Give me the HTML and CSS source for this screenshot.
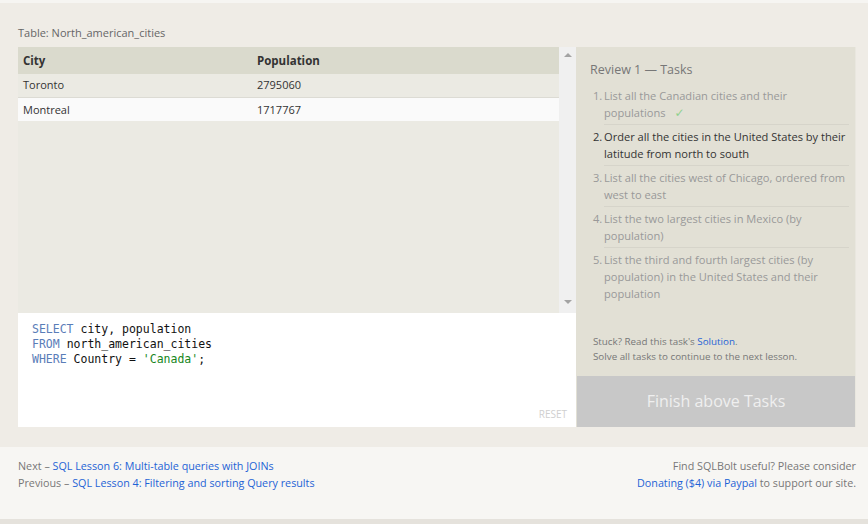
FILE: index.html
```html
<!DOCTYPE html>
<html>
<head>
<meta charset="utf-8">
<link rel="stylesheet" href="styles.css">
</head>
<body>
<div class="topstrip"></div>
<main class="lesson">
  <div class="table-label">Table: North_american_cities</div>
  <div class="workspace">
    <div class="left">
      <div class="results">
        <div class="results-table">
          <div class="row head"><div class="c1">City</div><div class="c2">Population</div></div>
          <div class="row odd"><div class="c1">Toronto</div><div class="c2">2795060</div></div>
          <div class="row even"><div class="c1">Montreal</div><div class="c2">1717767</div></div>
        </div>
        <div class="scrollbar">
          <svg class="arrow" width="8" height="5" viewBox="0 0 8 5"><polygon points="0,5 8,5 4,1" fill="#a3a3a3"/></svg>
          <svg class="arrow" width="8" height="5" viewBox="0 0 8 5"><polygon points="0,0 8,0 4,4" fill="#a3a3a3"/></svg>
        </div>
      </div>
      <div class="editor">
        <pre class="code"><span class="kw">SELECT</span> city, population
<span class="kw">FROM</span> north_american_cities
<span class="kw">WHERE</span> Country = <span class="str">'Canada'</span>;</pre>
        <div class="reset">RESET</div>
      </div>
    </div>
    <aside class="tasks">
      <div class="tasks-body">
        <div class="tasks-title">Review 1 — Tasks</div>
        <ol class="task-list">
          <li class="task done"><span class="num">1.</span><span class="txt">List all the Canadian cities and their populations</span></li>
          <li class="task current"><span class="num">2.</span><span class="txt">Order all the cities in the United States by their latitude from north to south</span></li>
          <li class="task"><span class="num">3.</span><span class="txt">List all the cities west of Chicago, ordered from west to east</span></li>
          <li class="task"><span class="num">4.</span><span class="txt">List the two largest cities in Mexico (by population)</span></li>
          <li class="task last"><span class="num">5.</span><span class="txt">List the third and fourth largest cities (by population) in the United States and their population</span></li>
        </ol>
        <div class="hint">
          <div>Stuck? Read this task's <a href="#">Solution</a>.</div>
          <div>Solve all tasks to continue to the next lesson.</div>
        </div>
      </div>
      <div class="finish">Finish above Tasks</div>
    </aside>
  </div>
</main>
<footer class="footer">
  <div class="nav">
    <div>Next – <a href="#">SQL Lesson 6: Multi-table queries with JOINs</a></div>
    <div>Previous – <a href="#">SQL Lesson 4: Filtering and sorting Query results</a></div>
  </div>
  <div class="donate">
    <div>Find SQLBolt useful? Please consider</div>
    <div><a href="#">Donating ($4) via Paypal</a> to support our site.</div>
  </div>
</footer>
<div class="bottomstrip"></div>
</body>
</html>
```
FILE: styles.css
```css
* { box-sizing: border-box; }
html, body { margin: 0; padding: 0; }
body {
  width: 868px;
  height: 524px;
  overflow: hidden;
  background: #efece6;
  font-family: "Open Sans", "Noto Sans", sans-serif;
  color: #333;
}
a { color: #1e63d6; text-decoration: none; }

.topstrip { height: 3px; background: #f6f5f2; }

.lesson { padding: 22px 12px 0 18px; height: 444px; }
.table-label { font-size: 11px; color: #666; line-height: 16px; height: 22px; }

.workspace { display: flex; width: 838px; height: 380px; }
.left { width: 558px; display: flex; flex-direction: column; }

.results { height: 266px; display: flex; background: #ebeae3; }
.results-table { flex: 1; }
.row { display: flex; font-size: 11px; }
.row .c1 { width: 234px; padding-left: 5px; }
.row .c2 { padding-left: 5px; }
.row.head { height: 27px; line-height: 27px; background: #dadacd; font-weight: bold; font-size: 11.5px; color: #333; }
.row.odd { height: 24px; line-height: 22px; background: #ebeae3; border-bottom: 1px solid #dcdbd4; }
.row.even { height: 23px; line-height: 23px; background: #fafafa; }

.scrollbar {
  width: 17px;
  background: #f0f0f0;
  display: flex;
  flex-direction: column;
  justify-content: space-between;
  align-items: center;
  padding: 5px 0 8px;
}
.arrow { display: block; }

.editor { flex: 1; background: #fff; position: relative; padding: 9px 14px; }
.code {
  margin: 0;
  font-family: "DejaVu Sans Mono", "Liberation Mono", monospace;
  font-size: 11.5px;
  line-height: 15px;
  color: #111;
}
.kw { color: #5a7db8; }
.str { color: #17861c; }
.reset {
  position: absolute;
  right: 9px;
  bottom: 6px;
  font-size: 10px;
  color: #cfcfcf;
}

.tasks { width: 280px; display: flex; flex-direction: column; background: #e2e0d5; border-right: 1px solid #e9e7df; }
.tasks-body { flex: 1; padding: 14px 6px 0 14px; }
.tasks-title { font-size: 12.5px; color: #777; line-height: 18px; margin-bottom: 8px; }
.task-list { list-style: none; margin: 0; padding: 0; }
.task { display: flex; font-size: 11.1px; line-height: 17px; color: #999; }
.task .num { width: 14px; padding-left: 3px; flex: none; padding-top: 3px; }
.task .txt { flex: 1; padding: 3px 0 3px; border-bottom: 1px solid #d6d4ca; }
.task:first-child .txt, .task:first-child .num { padding-top: 0; }
.task.last .txt { border-bottom: none; }
.task.current { color: #333; }
.task.done .txt::after {
  content: "✓";
  display: inline-block;
  color: #8fd08f;
  margin-left: 9px;
  font-size: 12px;
  line-height: 12px;
  font-family: "DejaVu Sans", sans-serif;
}

.hint { margin-top: 29px; font-size: 9.8px; line-height: 15px; color: #777; padding-left: 3px; }

.finish {
  height: 51px;
  margin: 0 0 0 1px;
  background: #c8c8c8;
  color: #efefef;
  font-size: 16px;
  text-align: center;
  line-height: 51px;
}

.footer {
  height: 72px;
  background: #f7f6f3;
  display: flex;
  justify-content: space-between;
  padding: 11px 12px 0 18px;
  font-size: 10.75px;
  line-height: 17px;
  color: #777;
}
.donate { text-align: right; }
.bottomstrip { height: 5px; background: #e5e2dc; }
```
